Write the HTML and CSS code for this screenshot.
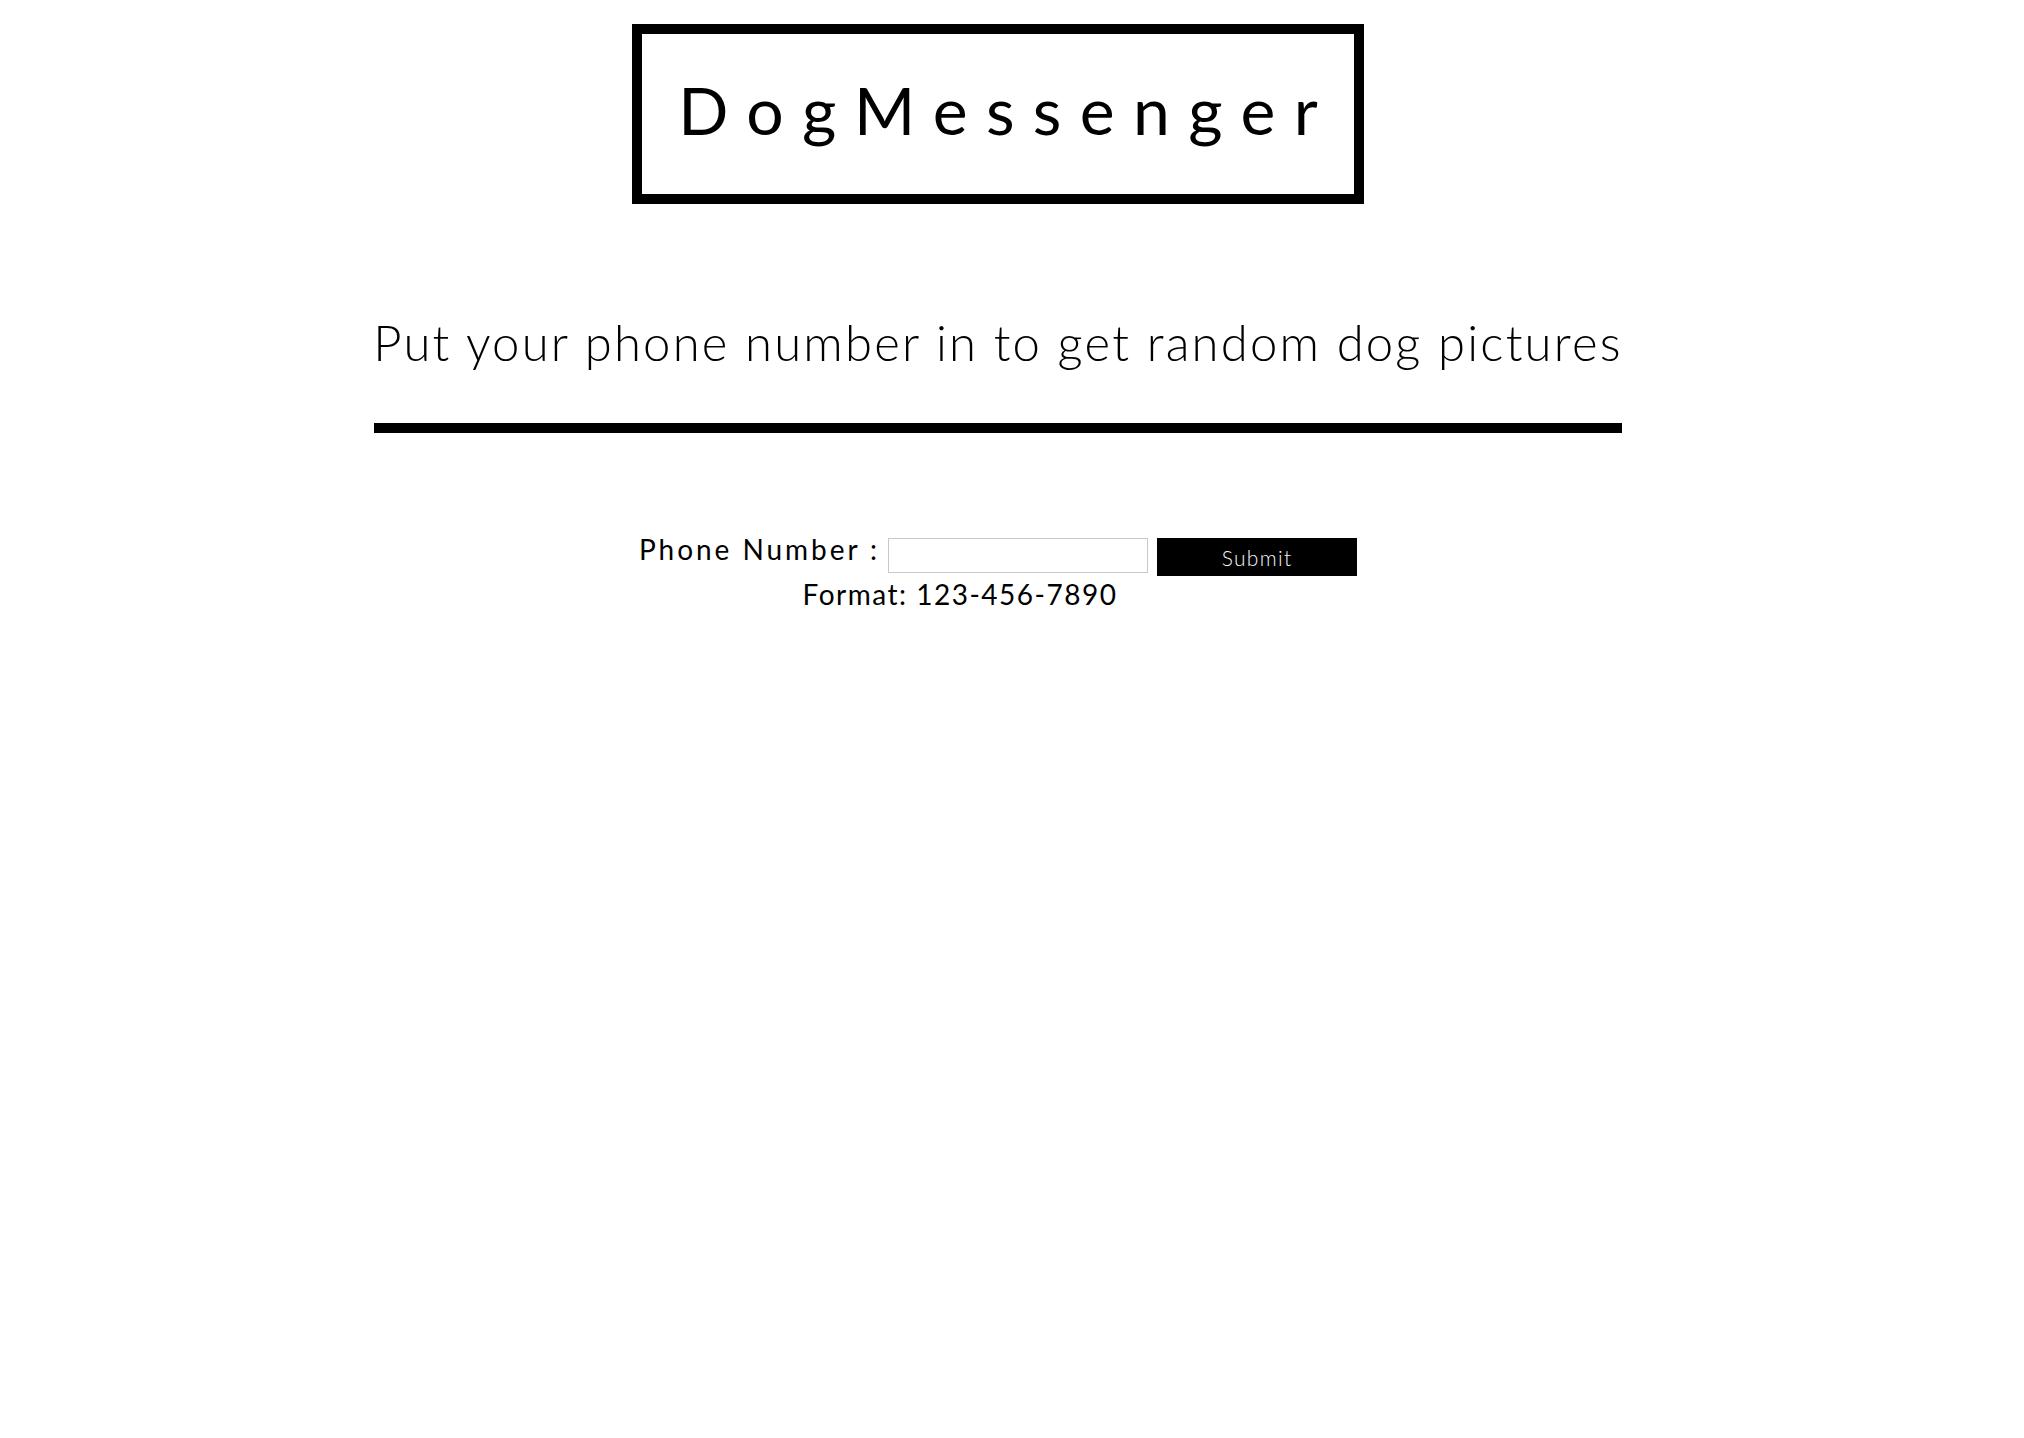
FILE: index.html
```html
<!DOCTYPE html>
<html lang="en">
<head>
<meta charset="utf-8">
<title>DogMessenger</title>
<link rel="stylesheet" href="styles.css">
</head>
<body>
<div class="page">
  <header class="logo">
    <h1 class="logo-box">DogMessenger</h1>
  </header>
  <h2 class="tagline">Put your phone number in to get random dog pictures</h2>
  <div class="rule"></div>
  <form class="phone-form">
    <div class="form-row">
      <label class="form-label" for="phone">Phone Number :</label>
      <input class="form-input" id="phone" type="tel">
      <button class="form-button" type="button">Submit</button>
    </div>
    <div class="form-hint">Format: 123-456-7890</div>
  </form>
</div>
</body>
</html>
```

FILE: styles.css
```css
html, body {
  margin: 0;
  padding: 0;
  background: #fff;
}

body {
  font-family: "Lato", "Liberation Sans", sans-serif;
  color: #000;
}

.page {
  padding: 24px 28px 0 0;
  display: flex;
  flex-direction: column;
  align-items: center;
}

.logo {
  display: flex;
  justify-content: center;
}

.logo-box {
  box-sizing: border-box;
  width: 732px;
  height: 180px;
  margin: 0;
  border: 10px solid #000;
  padding: 0 0 8px 0;
  display: flex;
  align-items: center;
  justify-content: center;
  font-size: 66px;
  font-weight: 400;
  letter-spacing: 18.4px;
  text-indent: 18.4px;
  line-height: 1.2;
}

.tagline {
  margin: 114px 0 0 0;
  font-size: 49px;
  line-height: 49px;
  font-weight: 300;
  letter-spacing: 2.2px;
  white-space: nowrap;
}

.rule {
  width: 1248px;
  height: 10px;
  margin-top: 56px;
  background: #000;
}

.phone-form {
  margin-top: 102px;
  display: flex;
  flex-direction: column;
  align-items: center;
}

.form-row {
  display: flex;
  align-items: flex-start;
}

.form-label {
  font-size: 28px;
  line-height: 28px;
  font-weight: 400;
  letter-spacing: 2.95px;
  margin-right: 8px;
}

.form-input {
  box-sizing: border-box;
  width: 260px;
  height: 35px;
  margin: 3px 9px 0 0;
  border: 1px solid #c8c8c8;
  padding: 0 6px;
  font: inherit;
  font-size: 20px;
}

.form-button {
  box-sizing: border-box;
  width: 200px;
  height: 38px;
  margin-top: 3px;
  border: none;
  background: #000;
  color: #f4f4f4;
  font-family: inherit;
  font-size: 21px;
  font-weight: 300;
  letter-spacing: 1.3px;
  padding: 0;
}

.form-hint {
  margin-top: 4px;
  padding-right: 76px;
  font-size: 28px;
  line-height: 28px;
  font-weight: 400;
  letter-spacing: 1.5px;
}
```
